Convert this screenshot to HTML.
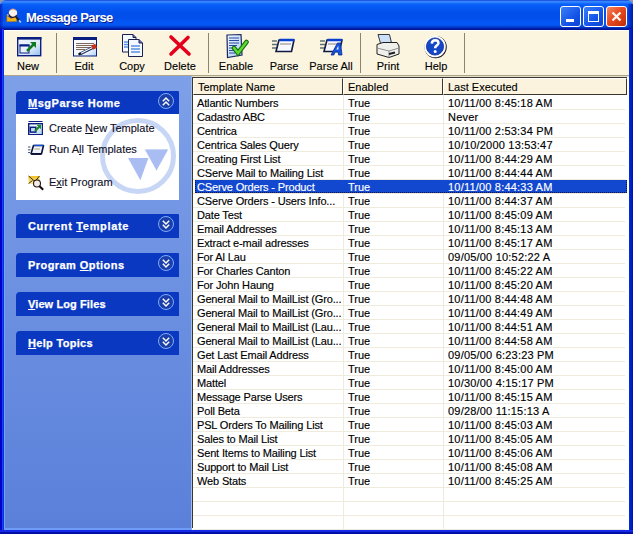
<!DOCTYPE html>
<html><head><meta charset="utf-8">
<style>
*{margin:0;padding:0;box-sizing:border-box}
html,body{width:633px;height:534px;overflow:hidden;background:#8C98B4}
body{position:relative;font-family:"Liberation Sans",sans-serif;font-size:11px;color:#000}
.a{position:absolute}
#title{left:0;top:0;width:633px;height:30px;border-radius:6px 6px 0 0;
background:linear-gradient(to bottom,#0620C8 0px,#3A8CFF 1px,#2C7CFF 2.5px,#0A62FA 4px,#0558F4 7px,#0250EC 12px,#024EEA 18px,#0558F6 23px,#0454F0 25px,#0040D0 27px,#0020A8 28.5px,#00108C 30px)}
#title .t{left:26px;top:10px;font-weight:bold;font-size:13px;line-height:15px;color:#fff;text-shadow:1px 1px 0 #0A1E8C;letter-spacing:-0.55px}
.wb{width:21px;height:21px;top:6px;border:1px solid #fff;border-radius:3px}
#frameL{left:0;top:29px;width:4px;height:505px;background:linear-gradient(to right,#0004C8 0px,#0004C8 2px,#1A40FF 2px,#1A40FF 3px,#0A30D8 3px,#0A30D8 4px)}
#frameR{left:629px;top:29px;width:4px;height:505px;background:linear-gradient(to right,#0030D8,#0020C8 2px,#0010B0 4px)}
#frameB{left:0;top:530px;width:633px;height:4px;background:linear-gradient(to bottom,#1428E8 0px,#1428E8 2px,#0010B0 2px,#000C98 4px)}
#toolbar{left:4px;top:30px;width:625px;height:46px;background:#FBF4DF;border-top:1px solid #fff;border-bottom:1px solid #ABA38A}
.tb{-webkit-text-stroke:0.12px #000;top:60px;text-align:center;width:60px;line-height:13px;height:13px}
.sep{top:33px;width:1px;height:40px;background:#8A8470}
#left{left:4px;top:76px;width:188px;height:454px;background:linear-gradient(to bottom,#7DA0E8,#5A80DA);border-left:1px solid #78A2F8;border-bottom:2px solid #6E9CF8;border-right:1px solid #A4BCE4}
.ph{left:16px;width:163px;height:23px;background:#0A38C0;border-radius:4px 1px 0 0;color:#fff;font-weight:bold;font-size:11px}
.ph span{position:absolute;left:12px;top:6px;line-height:13px;letter-spacing:0.5px;-webkit-text-stroke:0.25px #fff}
.ph u{text-decoration:underline;text-decoration-thickness:1px;text-underline-offset:0.5px}
.chev{position:absolute;left:142px;top:2px;width:16px;height:16px;border-radius:50%;border:1px solid #80ACFF;background:#1A3FA8}
#body1{left:16px;top:114px;width:163px;height:86px;background:#fff}
.it{-webkit-text-stroke:0.12px #10102A;line-height:13px;color:#10102A;left:49px}
.it u{text-decoration:underline;text-decoration-thickness:1px;text-underline-offset:0.5px}
#list{left:192px;top:76px;width:437px;height:454px;background:#fff;border-top:1px solid #E4DFCB}
#hdr{left:192px;top:77px;width:435px;height:18px;background:#FBF3DE}
.hc{-webkit-text-stroke:0.12px #000;top:78px;height:17px;border-top:1px solid #fff;border-left:1px solid #fff;border-right:1px solid #3A362A;border-bottom:1px solid #3A362A;background:#FBF3DE;line-height:13px;padding:2px 0 0 4px}
.row{left:192px;width:433px;height:14px;border-bottom:1px solid #EFEBDD;line-height:13px}
.row span{position:absolute;top:0}
.sel{background:#1B4ECB;color:#fff}
.rt{line-height:13px;white-space:nowrap;-webkit-text-stroke:0.15px currentColor}
.dt{letter-spacing:0.2px}
.nm{letter-spacing:-0.15px;width:145px;overflow:hidden}
</style></head><body>
<div id="title" class="a">
  <svg class="a" style="left:6px;top:8px" width="16" height="16" viewBox="0 0 16 16">
    <path d="M0.8 7.5 L5 10.5 L10.5 8 L10.8 13.5 L0.8 13.8 Z" fill="#F2B418" stroke="#9A6A10" stroke-width="0.5"/>
    <path d="M0.8 7.5 L1.5 6 L4 7.5" fill="#F8E0A8"/>
    <circle cx="7" cy="5" r="4.2" fill="#FAF0E6"/>
    <path d="M3 6.5 A4.2 4.2 0 0 0 10.6 7.2" stroke="#2A1020" stroke-width="1.2" fill="none"/>
    <path d="M3.2 3.2 A4.2 4.2 0 0 1 9.8 2.2" stroke="#C87050" stroke-width="0.8" fill="none"/>
    <path d="M9.8 8.6 L13.6 13" stroke="#1A1A30" stroke-width="1.9"/>
    <path d="M13 12.2 L14.8 14.4" stroke="#A8D4F4" stroke-width="1.6"/>
  </svg>
  <div class="a" style="left:628px;top:4px;width:5px;height:26px;background:linear-gradient(to right,rgba(0,20,170,0.3),rgba(0,16,160,0.85))"></div>
  <div class="a" style="left:0;top:4px;width:3px;height:26px;background:linear-gradient(to right,rgba(0,16,170,0.7),rgba(0,30,200,0.2))"></div>
  <div class="a t">Message Parse</div>
  <div class="a wb" style="left:560px;background:linear-gradient(135deg,#3C80F8,#1454E8 60%,#0C44D0)">
    <div class="a" style="left:5px;top:12px;width:8px;height:3px;background:#fff"></div>
  </div>
  <div class="a wb" style="left:583px;background:linear-gradient(135deg,#3C80F8,#1454E8 60%,#0C44D0)">
    <div class="a" style="left:4px;top:4px;width:11px;height:11px;border:1px solid #fff;border-top-width:3px"></div>
  </div>
  <div class="a wb" style="left:606px;background:linear-gradient(135deg,#F58A60,#E84A20 45%,#D03810 80%,#B82808)">
    <svg class="a" style="left:3px;top:3px" width="13" height="13"><path d="M2.5 2.5 L10.5 10.5 M10.5 2.5 L2.5 10.5" stroke="#FFF8F0" stroke-width="2.3"/></svg>
  </div>
</div>
<div id="frameL" class="a"></div>
<div id="frameR" class="a"></div>
<div id="toolbar" class="a"></div>
<!-- toolbar buttons -->
<svg class="a" style="left:17px;top:37px" width="25" height="20" viewBox="0 0 25 20">
  <defs><linearGradient id="gN" x1="0" y1="0" x2="1" y2="1"><stop offset="0" stop-color="#F4F8FF"/><stop offset="0.6" stop-color="#DCE8FA"/><stop offset="1" stop-color="#8EC0F0"/></linearGradient></defs>
  <rect x="0.7" y="0.7" width="23" height="18" fill="url(#gN)" stroke="#0B1F80" stroke-width="1.4"/>
  <rect x="0" y="0" width="24.4" height="2.6" fill="#0B1F80"/>
  <rect x="3" y="8" width="9" height="8" fill="#E8F0FF" stroke="#0B1F80" stroke-width="1"/>
  <rect x="2.5" y="7.5" width="10" height="2" fill="#0B1F80"/>
  <path d="M10 14 L17 7" stroke="#0E7A20" stroke-width="2.5"/>
  <path d="M13 5 L19 5 L19 11 Z" fill="#0E7A20"/>
</svg>
<div class="a tb" style="left:-2px">New</div>
<div class="a sep" style="left:56px"></div>
<svg class="a" style="left:73px;top:37px" width="25" height="20" viewBox="0 0 25 20">
  <defs><linearGradient id="gE" x1="0" y1="0" x2="1" y2="1"><stop offset="0" stop-color="#FFFFFF"/><stop offset="0.7" stop-color="#EEF4FF"/><stop offset="1" stop-color="#A8D0F8"/></linearGradient></defs>
  <rect x="0.5" y="0.5" width="23" height="18.5" fill="url(#gE)" stroke="#0B1F80"/>
  <rect x="0" y="0" width="24" height="3" fill="#0B1F80"/>
  <path d="M3 6.5 H21 M3 8.5 H20 M3 10.5 H18 M3 12.5 H12" stroke="#806858" stroke-width="1"/>
  <path d="M7 17 L21 10" stroke="#1A2A60" stroke-width="3"/>
  <path d="M8 16.3 L20 10.3" stroke="#FFFFFF" stroke-width="1.2"/>
  <path d="M5.5 17.5 L7.5 16.5" stroke="#101010" stroke-width="2"/>
  <rect x="19" y="7.5" width="4.5" height="4.5" fill="#C83018" transform="rotate(-25 21 10)"/>
</svg>
<div class="a tb" style="left:54px">Edit</div>
<svg class="a" style="left:121px;top:33px" width="24" height="25" viewBox="0 0 24 25">
  <path d="M1.5 1.5 H12 L15 4.5 V19 H1.5 Z" fill="#F4F8FF" stroke="#1A2050"/>
  <path d="M12 1.5 V4.5 H15" fill="#6070C0" stroke="#1A2050"/>
  <path d="M3 9 H8 M3 11.5 H8 M3 14 H8" stroke="#5A90E0" stroke-width="1.4"/>
  <path d="M7.5 6.5 H18 L21.5 10 V23.5 H7.5 Z" fill="#F4F8FF" stroke="#1A2050"/>
  <path d="M18 6.5 V10 H21.5" fill="#6070C0" stroke="#1A2050"/>
  <path d="M10 13 H19 M10 16 H19 M10 19 H19" stroke="#5A90E0" stroke-width="1.4"/>
</svg>
<div class="a tb" style="left:102px">Copy</div>
<svg class="a" style="left:168px;top:34px" width="24" height="23" viewBox="0 0 24 23">
  <path d="M3 3 L21 20 M20 3.5 L3 20" stroke="#E4001A" stroke-width="3.6" stroke-linecap="round"/>
</svg>
<div class="a tb" style="left:150px">Delete</div>
<div class="a sep" style="left:208px"></div>
<svg class="a" style="left:225px;top:33px" width="24" height="26" viewBox="0 0 24 26">
  <defs><linearGradient id="gP" x1="0" y1="0" x2="1" y2="1"><stop offset="0" stop-color="#F0F6FF"/><stop offset="1" stop-color="#A8CCF4"/></linearGradient></defs>
  <path d="M2 2 L16 1.5 L17 22 L2.5 24.5 Z" fill="url(#gP)" stroke="#1A2A60" stroke-width="1.2"/>
  <path d="M4 5 H14 M4 7.5 H14 M4 10 H14 M4 12.5 H12 M4 15 H9 M4 17.5 H9 M4 20 H10" stroke="#2A4AA0" stroke-width="1.2"/>
  <path d="M9 15 L13 20 L21.5 9" stroke="#1A6A10" stroke-width="4.5" fill="none" stroke-linecap="round"/>
  <path d="M9 15 L13 20 L21.5 9" stroke="#5ADC30" stroke-width="2.4" fill="none" stroke-linecap="round"/>
</svg>
<div class="a tb" style="left:206px">Enable</div>
<svg class="a" style="left:272px;top:38px" width="24" height="16" viewBox="0 0 24 16">
  <path d="M0 3 H5 M0 6.5 H5 M0 10 H5" stroke="#607070" stroke-width="1.5"/>
  <path d="M7 2 H22 L19.5 13.5 H4 Z" fill="#F6F8FF" stroke="#101A40" stroke-width="1.6"/>
  <path d="M7.5 2 H22" stroke="#0A40D0" stroke-width="2.5"/>
  <path d="M8 6 H19" stroke="#908070" stroke-width="1"/>
</svg>
<div class="a tb" style="left:254px">Parse</div>
<svg class="a" style="left:320px;top:38px" width="24" height="18" viewBox="0 0 24 18">
  <path d="M0 3 H5 M0 6.5 H5 M0 10 H5" stroke="#607070" stroke-width="1.5"/>
  <path d="M7 2 H22 L19.5 13.5 H4 Z" fill="#F6F8FF" stroke="#101A40" stroke-width="1.6"/>
  <path d="M7.5 2 H22" stroke="#0A40D0" stroke-width="2.5"/>
  <path d="M8 6 H19" stroke="#908070" stroke-width="1"/>
  <path d="M11 17 L17.5 5 L20.5 5 L22 17 L18.5 17 L18.3 14 L15.2 14 L13.8 17 Z" fill="#1454E0" stroke="#0A2A90" stroke-width="0.8"/>
  <path d="M16.3 11.5 L18.3 7.8 L18.5 11.5 Z" fill="#E8F0FF"/>
</svg>
<div class="a tb" style="left:301px">Parse All</div>
<div class="a sep" style="left:360px"></div>
<svg class="a" style="left:376px;top:33px" width="25" height="26" viewBox="0 0 25 26">
  <path d="M2 1.5 H13.5 L16 12 H5 Z" fill="#CCE0F8" stroke="#303840" stroke-width="1"/>
  <path d="M1 11.5 L7 9.5 H21 L23 13 V21 L13 24.5 L1 21 Z" fill="#F0F0EC" stroke="#202020" stroke-width="1"/>
  <path d="M1 15 L13 18 L23 15" stroke="#909090" stroke-width="1" fill="none"/>
  <path d="M13 18 V24.5" stroke="#909090" stroke-width="1"/>
  <path d="M13 21 L19 19.5" stroke="#202020" stroke-width="2"/>
</svg>
<div class="a tb" style="left:358px">Print</div>
<svg class="a" style="left:423px;top:34px" width="25" height="25" viewBox="0 0 25 25">
  <circle cx="12.6" cy="13.1" r="11.2" fill="#1A1A28"/>
  <circle cx="12" cy="12.5" r="10.8" fill="#fff"/>
  <circle cx="12" cy="12.5" r="8.6" fill="#1446C8"/>
  <circle cx="12" cy="12.5" r="8.6" fill="none" stroke="#0A2A90" stroke-width="0.8"/>
  <path d="M8.8 9.6 Q9 6.2 12.2 6.2 Q15.6 6.3 15.4 9.2 Q15.2 11 13.2 12 Q12.2 12.6 12.2 14.2" stroke="#fff" stroke-width="2.6" fill="none"/>
  <circle cx="12.2" cy="17.6" r="1.5" fill="#fff"/>
</svg>
<div class="a tb" style="left:406px">Help</div>
<div class="a sep" style="left:464px"></div>
<div id="left" class="a"></div>
<div class="a ph" style="top:91px"><span style="letter-spacing:0.53px"><u>M</u>sgParse Home</span><div class="chev"><svg class="a" style="left:2px;top:2px" width="10" height="11"><path d="M1.8 5.2 L5 2 L8.2 5.2 M1.8 9.2 L5 6 L8.2 9.2" stroke="#fff" stroke-width="1.5" fill="none"/></svg></div></div>
<div id="body1" class="a">
  <svg class="a" style="left:84px;top:0px" width="79" height="86" viewBox="0 0 79 86">
    <circle cx="38" cy="42" r="35.5" fill="none" stroke="#C8D6F6" stroke-width="5"/>
    <path d="M28 44 L48.4 44 L40.4 66.3 Z" fill="#A9BDF2"/>
    <path d="M44.2 35 L68.8 35 L56.5 57.3 Z" fill="#A9BDF2" stroke="#fff" stroke-width="0.8"/>
  </svg>
</div>
<svg class="a" style="left:28px;top:121px" width="15" height="14" viewBox="0 0 15 14">
  <defs><linearGradient id="gC" x1="0" y1="0" x2="1" y2="1"><stop offset="0.4" stop-color="#F2F7FF"/><stop offset="1" stop-color="#A8CCF0"/></linearGradient></defs>
  <rect x="0.5" y="0" width="14" height="1" fill="#0B1F80"/>
  <rect x="0.7" y="2.7" width="13.8" height="11" fill="url(#gC)" stroke="#0B1F80" stroke-width="1.4"/>
  <rect x="2.3" y="6.3" width="5.5" height="4.8" fill="#C8DCF8" stroke="#0B1F80" stroke-width="1.5"/>
  <path d="M7 10 L11.2 5.8" stroke="#1A8A2A" stroke-width="2.2"/>
  <path d="M8.5 3.8 L13 3.8 L13 8.3 Z" fill="#1A8A2A"/>
</svg>
<div class="a it" style="top:122px">Create <u>N</u>ew Template</div>
<svg class="a" style="left:27px;top:144px" width="18" height="12" viewBox="0 0 18 12">
  <path d="M1 3 H3.5 M1 5.8 H3.5 M1 8.6 H3" stroke="#405060" stroke-width="1"/>
  <path d="M6.5 1.5 H16.5 L14.5 9.8 H4 Z" fill="#EEF3FF" stroke="#0A1440" stroke-width="1.6" stroke-linejoin="round"/>
  <path d="M6.8 1.4 H16.4" stroke="#1050D0" stroke-width="1.3"/>
  <path d="M4.2 10 H14.4" stroke="#0A1030" stroke-width="1.8"/>
  <path d="M7.5 5 H13" stroke="#B0A060" stroke-width="0.9"/>
</svg>
<div class="a it" style="top:143px">Run A<u>l</u>l Templates</div>
<svg class="a" style="left:28px;top:175px" width="17" height="17" viewBox="0 0 17 17">
  <defs><linearGradient id="gX" x1="0" y1="0" x2="0" y2="1"><stop offset="0" stop-color="#F0C020"/><stop offset="1" stop-color="#F8E8A0"/></linearGradient></defs>
  <rect x="0.5" y="1" width="11" height="8" fill="url(#gX)"/>
  <path d="M0.6 1 L7 6.5 L11.5 1 M0.6 8.5 L4.5 5.5" stroke="#2A2010" stroke-width="0.9" fill="none"/>
  <circle cx="9" cy="8.5" r="3.5" fill="#F2ECE6" stroke="#2A1418" stroke-width="1.1"/>
  <path d="M11.3 11 L15.2 14.8" stroke="#200810" stroke-width="2"/>
</svg>
<div class="a it" style="top:176px">E<u>x</u>it Program</div>
<div class="a ph" style="top:214px;height:24px"><span style="letter-spacing:0.68px">Current <u>T</u>emplate</span><div class="chev"><svg class="a" style="left:2px;top:2px" width="10" height="11"><path d="M1.8 1.8 L5 5 L8.2 1.8 M1.8 5.8 L5 9 L8.2 5.8" stroke="#fff" stroke-width="1.5" fill="none"/></svg></div></div>
<div class="a ph" style="top:253px;height:24px"><span style="letter-spacing:0.44px">Program <u>O</u>ptions</span><div class="chev"><svg class="a" style="left:2px;top:2px" width="10" height="11"><path d="M1.8 1.8 L5 5 L8.2 1.8 M1.8 5.8 L5 9 L8.2 5.8" stroke="#fff" stroke-width="1.5" fill="none"/></svg></div></div>
<div class="a ph" style="top:292px;height:24px"><span style="letter-spacing:0.1px"><u>V</u>iew Log Files</span><div class="chev"><svg class="a" style="left:2px;top:2px" width="10" height="11"><path d="M1.8 1.8 L5 5 L8.2 1.8 M1.8 5.8 L5 9 L8.2 5.8" stroke="#fff" stroke-width="1.5" fill="none"/></svg></div></div>
<div class="a ph" style="top:331px;height:24px"><span style="letter-spacing:0.31px"><u>H</u>elp Topics</span><div class="chev"><svg class="a" style="left:2px;top:2px" width="10" height="11"><path d="M1.8 1.8 L5 5 L8.2 1.8 M1.8 5.8 L5 9 L8.2 5.8" stroke="#fff" stroke-width="1.5" fill="none"/></svg></div></div>
<div id="list" class="a"></div>
<div class="a" style="left:343px;top:95px;width:1px;height:435px;background:#EFEBDD"></div>
<div class="a" style="left:443px;top:95px;width:1px;height:435px;background:#EFEBDD"></div>
<div class="a rt nm" style="left:197px;top:97px;color:#000">Atlantic Numbers</div><div class="a rt" style="left:348px;top:97px;color:#000">True</div><div class="a rt dt" style="left:448px;top:97px;color:#000">10/11/00 8:45:18 AM</div>
<div class="a" style="left:193px;top:109px;width:432px;height:1px;background:#EFEBDD"></div>
<div class="a rt nm" style="left:197px;top:111px;color:#000">Cadastro ABC</div><div class="a rt" style="left:348px;top:111px;color:#000">True</div><div class="a rt dt" style="left:448px;top:111px;color:#000">Never</div>
<div class="a" style="left:193px;top:123px;width:432px;height:1px;background:#EFEBDD"></div>
<div class="a rt nm" style="left:197px;top:125px;color:#000">Centrica</div><div class="a rt" style="left:348px;top:125px;color:#000">True</div><div class="a rt dt" style="left:448px;top:125px;color:#000">10/11/00 2:53:34 PM</div>
<div class="a" style="left:193px;top:137px;width:432px;height:1px;background:#EFEBDD"></div>
<div class="a rt nm" style="left:197px;top:139px;color:#000">Centrica Sales Query</div><div class="a rt" style="left:348px;top:139px;color:#000">True</div><div class="a rt dt" style="left:448px;top:139px;color:#000">10/10/2000 13:53:47</div>
<div class="a" style="left:193px;top:151px;width:432px;height:1px;background:#EFEBDD"></div>
<div class="a rt nm" style="left:197px;top:153px;color:#000">Creating First List</div><div class="a rt" style="left:348px;top:153px;color:#000">True</div><div class="a rt dt" style="left:448px;top:153px;color:#000">10/11/00 8:44:29 AM</div>
<div class="a" style="left:193px;top:165px;width:432px;height:1px;background:#EFEBDD"></div>
<div class="a rt nm" style="left:197px;top:167px;color:#000">CServe Mail to Mailing List</div><div class="a rt" style="left:348px;top:167px;color:#000">True</div><div class="a rt dt" style="left:448px;top:167px;color:#000">10/11/00 8:44:44 AM</div>
<div class="a" style="left:193px;top:179px;width:432px;height:1px;background:#EFEBDD"></div>
<div class="a" style="left:195px;top:180px;width:432px;height:13px;background:#1248D0;border:1px dotted #05154A;border-top:none"></div>
<div class="a rt nm" style="left:197px;top:181px;color:#fff">CServe Orders - Product</div><div class="a rt" style="left:348px;top:181px;color:#fff">True</div><div class="a rt dt" style="left:448px;top:181px;color:#fff">10/11/00 8:44:33 AM</div>
<div class="a" style="left:193px;top:193px;width:432px;height:1px;background:#EFEBDD"></div>
<div class="a rt nm" style="left:197px;top:195px;color:#000">CServe Orders - Users Info...</div><div class="a rt" style="left:348px;top:195px;color:#000">True</div><div class="a rt dt" style="left:448px;top:195px;color:#000">10/11/00 8:44:37 AM</div>
<div class="a" style="left:193px;top:207px;width:432px;height:1px;background:#EFEBDD"></div>
<div class="a rt nm" style="left:197px;top:209px;color:#000">Date Test</div><div class="a rt" style="left:348px;top:209px;color:#000">True</div><div class="a rt dt" style="left:448px;top:209px;color:#000">10/11/00 8:45:09 AM</div>
<div class="a" style="left:193px;top:221px;width:432px;height:1px;background:#EFEBDD"></div>
<div class="a rt nm" style="left:197px;top:223px;color:#000">Email Addresses</div><div class="a rt" style="left:348px;top:223px;color:#000">True</div><div class="a rt dt" style="left:448px;top:223px;color:#000">10/11/00 8:45:13 AM</div>
<div class="a" style="left:193px;top:235px;width:432px;height:1px;background:#EFEBDD"></div>
<div class="a rt nm" style="left:197px;top:237px;color:#000">Extract e-mail adresses</div><div class="a rt" style="left:348px;top:237px;color:#000">True</div><div class="a rt dt" style="left:448px;top:237px;color:#000">10/11/00 8:45:17 AM</div>
<div class="a" style="left:193px;top:249px;width:432px;height:1px;background:#EFEBDD"></div>
<div class="a rt nm" style="left:197px;top:251px;color:#000">For Al Lau</div><div class="a rt" style="left:348px;top:251px;color:#000">True</div><div class="a rt dt" style="left:448px;top:251px;color:#000">09/05/00 10:52:22 A</div>
<div class="a" style="left:193px;top:263px;width:432px;height:1px;background:#EFEBDD"></div>
<div class="a rt nm" style="left:197px;top:265px;color:#000">For Charles Canton</div><div class="a rt" style="left:348px;top:265px;color:#000">True</div><div class="a rt dt" style="left:448px;top:265px;color:#000">10/11/00 8:45:22 AM</div>
<div class="a" style="left:193px;top:277px;width:432px;height:1px;background:#EFEBDD"></div>
<div class="a rt nm" style="left:197px;top:279px;color:#000">For John Haung</div><div class="a rt" style="left:348px;top:279px;color:#000">True</div><div class="a rt dt" style="left:448px;top:279px;color:#000">10/11/00 8:45:20 AM</div>
<div class="a" style="left:193px;top:291px;width:432px;height:1px;background:#EFEBDD"></div>
<div class="a rt nm" style="left:197px;top:293px;color:#000">General Mail to MailList (Gro...</div><div class="a rt" style="left:348px;top:293px;color:#000">True</div><div class="a rt dt" style="left:448px;top:293px;color:#000">10/11/00 8:44:48 AM</div>
<div class="a" style="left:193px;top:305px;width:432px;height:1px;background:#EFEBDD"></div>
<div class="a rt nm" style="left:197px;top:307px;color:#000">General Mail to MailList (Gro...</div><div class="a rt" style="left:348px;top:307px;color:#000">True</div><div class="a rt dt" style="left:448px;top:307px;color:#000">10/11/00 8:44:49 AM</div>
<div class="a" style="left:193px;top:319px;width:432px;height:1px;background:#EFEBDD"></div>
<div class="a rt nm" style="left:197px;top:321px;color:#000">General Mail to MailList (Lau...</div><div class="a rt" style="left:348px;top:321px;color:#000">True</div><div class="a rt dt" style="left:448px;top:321px;color:#000">10/11/00 8:44:51 AM</div>
<div class="a" style="left:193px;top:333px;width:432px;height:1px;background:#EFEBDD"></div>
<div class="a rt nm" style="left:197px;top:335px;color:#000">General Mail to MailList (Lau...</div><div class="a rt" style="left:348px;top:335px;color:#000">True</div><div class="a rt dt" style="left:448px;top:335px;color:#000">10/11/00 8:44:58 AM</div>
<div class="a" style="left:193px;top:347px;width:432px;height:1px;background:#EFEBDD"></div>
<div class="a rt nm" style="left:197px;top:349px;color:#000">Get Last Email Address</div><div class="a rt" style="left:348px;top:349px;color:#000">True</div><div class="a rt dt" style="left:448px;top:349px;color:#000">09/05/00 6:23:23 PM</div>
<div class="a" style="left:193px;top:361px;width:432px;height:1px;background:#EFEBDD"></div>
<div class="a rt nm" style="left:197px;top:363px;color:#000">Mail Addresses</div><div class="a rt" style="left:348px;top:363px;color:#000">True</div><div class="a rt dt" style="left:448px;top:363px;color:#000">10/11/00 8:45:00 AM</div>
<div class="a" style="left:193px;top:375px;width:432px;height:1px;background:#EFEBDD"></div>
<div class="a rt nm" style="left:197px;top:377px;color:#000">Mattel</div><div class="a rt" style="left:348px;top:377px;color:#000">True</div><div class="a rt dt" style="left:448px;top:377px;color:#000">10/30/00 4:15:17 PM</div>
<div class="a" style="left:193px;top:389px;width:432px;height:1px;background:#EFEBDD"></div>
<div class="a rt nm" style="left:197px;top:391px;color:#000">Message Parse Users</div><div class="a rt" style="left:348px;top:391px;color:#000">True</div><div class="a rt dt" style="left:448px;top:391px;color:#000">10/11/00 8:45:15 AM</div>
<div class="a" style="left:193px;top:403px;width:432px;height:1px;background:#EFEBDD"></div>
<div class="a rt nm" style="left:197px;top:405px;color:#000">Poll Beta</div><div class="a rt" style="left:348px;top:405px;color:#000">True</div><div class="a rt dt" style="left:448px;top:405px;color:#000">09/28/00 11:15:13 A</div>
<div class="a" style="left:193px;top:417px;width:432px;height:1px;background:#EFEBDD"></div>
<div class="a rt nm" style="left:197px;top:419px;color:#000">PSL Orders To Mailing List</div><div class="a rt" style="left:348px;top:419px;color:#000">True</div><div class="a rt dt" style="left:448px;top:419px;color:#000">10/11/00 8:45:03 AM</div>
<div class="a" style="left:193px;top:431px;width:432px;height:1px;background:#EFEBDD"></div>
<div class="a rt nm" style="left:197px;top:433px;color:#000">Sales to Mail List</div><div class="a rt" style="left:348px;top:433px;color:#000">True</div><div class="a rt dt" style="left:448px;top:433px;color:#000">10/11/00 8:45:05 AM</div>
<div class="a" style="left:193px;top:445px;width:432px;height:1px;background:#EFEBDD"></div>
<div class="a rt nm" style="left:197px;top:447px;color:#000">Sent Items to Mailing List</div><div class="a rt" style="left:348px;top:447px;color:#000">True</div><div class="a rt dt" style="left:448px;top:447px;color:#000">10/11/00 8:45:06 AM</div>
<div class="a" style="left:193px;top:459px;width:432px;height:1px;background:#EFEBDD"></div>
<div class="a rt nm" style="left:197px;top:461px;color:#000">Support to Mail List</div><div class="a rt" style="left:348px;top:461px;color:#000">True</div><div class="a rt dt" style="left:448px;top:461px;color:#000">10/11/00 8:45:08 AM</div>
<div class="a" style="left:193px;top:473px;width:432px;height:1px;background:#EFEBDD"></div>
<div class="a rt nm" style="left:197px;top:475px;color:#000">Web Stats</div><div class="a rt" style="left:348px;top:475px;color:#000">True</div><div class="a rt dt" style="left:448px;top:475px;color:#000">10/11/00 8:45:25 AM</div>
<div class="a" style="left:193px;top:487px;width:432px;height:1px;background:#EFEBDD"></div>
<div class="a" style="left:193px;top:501px;width:432px;height:1px;background:#EFEBDD"></div>
<div class="a" style="left:193px;top:515px;width:432px;height:1px;background:#EFEBDD"></div>
<div class="a" style="left:193px;top:529px;width:432px;height:1px;background:#EFEBDD"></div>
<div class="a" style="left:192px;top:77px;width:435px;height:1px;background:#3A362A"></div>
<div class="a" style="left:192px;top:77px;width:1px;height:451px;background:#3A362A"></div>
<div class="a hc" style="left:193px;width:150px">Template Name</div>
<div class="a hc" style="left:343px;width:100px">Enabled</div>
<div class="a hc" style="left:443px;width:184px">Last Executed</div>

<div id="frameB" class="a"></div>
</body></html>
